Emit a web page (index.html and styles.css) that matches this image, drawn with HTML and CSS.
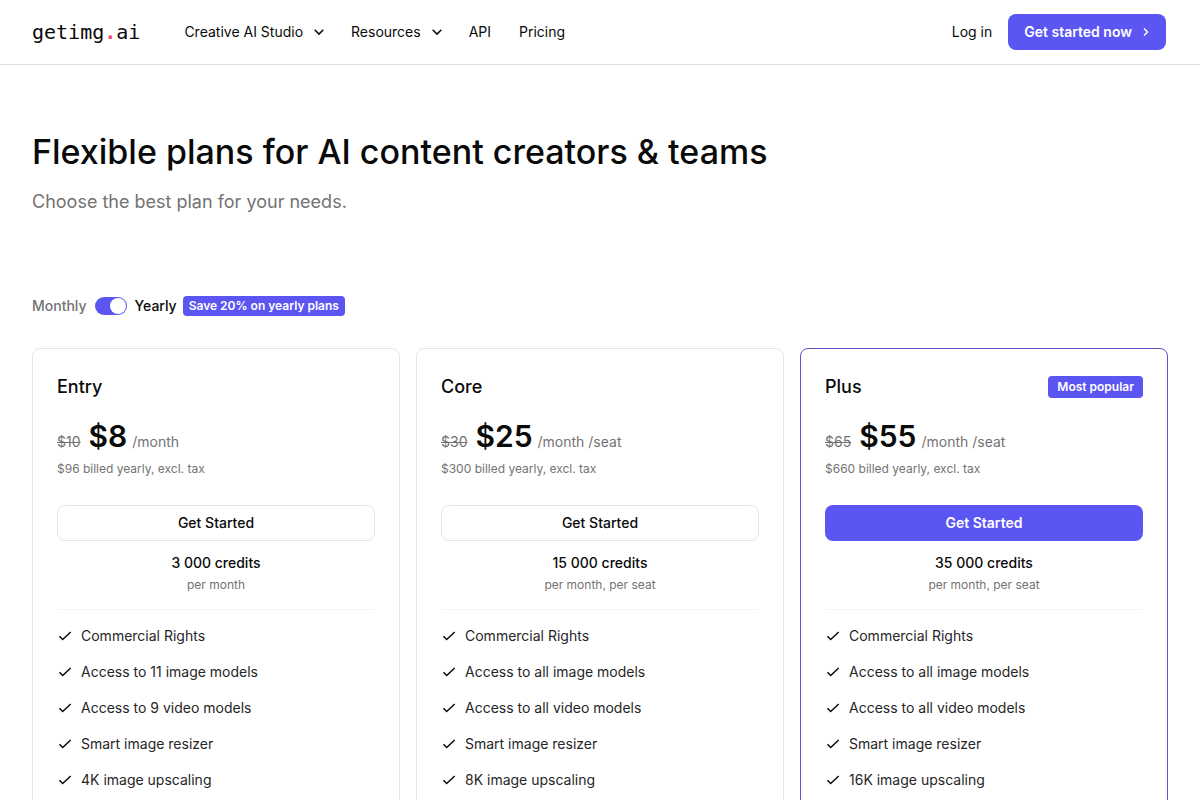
FILE: index.html
```html
<!DOCTYPE html>
<html lang="en">
<head>
    <meta charset="utf-8">
    <meta name="viewport" content="width=device-width, initial-scale=1">
    <title>Pricing - getimg.ai</title>
    <link rel="stylesheet" href="styles.css">
</head>
<body>
    <svg class="sprite" aria-hidden="true">
        <symbol id="check" viewBox="0 0 16 16"><path d="M2.500 8.300l3.200 3.200 8-7.500"/></symbol>
        <symbol id="chevron" viewBox="0 0 16 16"><path d="M3.700 5.800l4.300 4.300 4.300-4.300"/></symbol>
        <symbol id="arrow" viewBox="0 0 8 16"><path d="M2 4.500L5.500 8 2 11.500"/></symbol>
    </svg>

    <header class="header">
        <a class="logo" href="#">getimg<span>.</span>ai</a>
        <nav class="nav">
            <button type="button">Creative AI Studio <svg class="icon"><use href="#chevron"/></svg></button>
            <button type="button">Resources <svg class="icon"><use href="#chevron"/></svg></button>
            <a href="#">API</a>
            <a href="#">Pricing</a>
        </nav>
        <div class="account">
            <a href="#">Log in</a>
            <a class="btn btn-primary" href="#">Get started now <svg class="icon icon-arrow"><use href="#arrow"/></svg></a>
        </div>
    </header>

    <main class="container">
        <h1>Flexible plans for AI content creators &amp; teams</h1>
        <p class="subtitle">Choose the best plan for your needs.</p>

        <div class="billing">
            <span class="billing-off">Monthly</span>
            <input id="yearly" class="switch" type="checkbox" role="switch" checked>
            <div class="billing-on">
                <label for="yearly">Yearly</label>
                <span class="badge">Save 20% on yearly plans</span>
            </div>
        </div>

        <div class="plans">
            <section class="plan">
                <div class="plan-head">
                    <h2>Entry</h2>
                </div>
                <p class="price"><s>$10</s> <strong>$8</strong> <span>/month</span></p>
                <p class="small">$96 billed yearly, excl. tax</p>
                <button class="btn btn-outline" type="button">Get Started</button>
                <div class="credits">
                    <p>3 000 credits</p>
                    <p class="small">per month</p>
                </div>
                <ul class="features">
                    <li><svg class="icon"><use href="#check"/></svg>Commercial Rights</li>
                    <li><svg class="icon"><use href="#check"/></svg>Access to 11 image models</li>
                    <li><svg class="icon"><use href="#check"/></svg>Access to 9 video models</li>
                    <li><svg class="icon"><use href="#check"/></svg>Smart image resizer</li>
                    <li><svg class="icon"><use href="#check"/></svg>4K image upscaling</li>
                </ul>
            </section>

            <section class="plan">
                <div class="plan-head">
                    <h2>Core</h2>
                </div>
                <p class="price"><s>$30</s> <strong>$25</strong> <span>/month /seat</span></p>
                <p class="small">$300 billed yearly, excl. tax</p>
                <button class="btn btn-outline" type="button">Get Started</button>
                <div class="credits">
                    <p>15 000 credits</p>
                    <p class="small">per month, per seat</p>
                </div>
                <ul class="features">
                    <li><svg class="icon"><use href="#check"/></svg>Commercial Rights</li>
                    <li><svg class="icon"><use href="#check"/></svg>Access to all image models</li>
                    <li><svg class="icon"><use href="#check"/></svg>Access to all video models</li>
                    <li><svg class="icon"><use href="#check"/></svg>Smart image resizer</li>
                    <li><svg class="icon"><use href="#check"/></svg>8K image upscaling</li>
                </ul>
            </section>

            <section class="plan plan-popular">
                <div class="plan-head">
                    <h2>Plus</h2>
                    <span class="badge badge-large">Most popular</span>
                </div>
                <p class="price"><s>$65</s> <strong>$55</strong> <span>/month /seat</span></p>
                <p class="small">$660 billed yearly, excl. tax</p>
                <button class="btn btn-primary" type="button">Get Started</button>
                <div class="credits">
                    <p>35 000 credits</p>
                    <p class="small">per month, per seat</p>
                </div>
                <ul class="features">
                    <li><svg class="icon"><use href="#check"/></svg>Commercial Rights</li>
                    <li><svg class="icon"><use href="#check"/></svg>Access to all image models</li>
                    <li><svg class="icon"><use href="#check"/></svg>Access to all video models</li>
                    <li><svg class="icon"><use href="#check"/></svg>Smart image resizer</li>
                    <li><svg class="icon"><use href="#check"/></svg>16K image upscaling</li>
                </ul>
            </section>
        </div>
    </main>
</body>
</html>
```
FILE: styles.css
```css
* {
    box-sizing: border-box;
}
body {
    margin: 0;
    font-family: Inter, "Liberation Sans", sans-serif;
    font-size: 14px;
    line-height: 20px;
    color: #0a0a0a;
    background-color: #fff;
}
h1, h2, p, ul {
    margin: 0;
    padding: 0;
    font-weight: 500;
}
a {
    color: inherit;
    text-decoration: none;
}
button {
    font: inherit;
    color: inherit;
    cursor: pointer;
}
.sprite {
    display: none;
}
.icon {
    width: 16px;
    height: 16px;
    flex: none;
    fill: none;
    stroke: currentColor;
    stroke-width: 1.5;
}
.icon-arrow {
    width: 8px;
}

/* Header */
.header {
    display: flex;
    align-items: center;
    height: 65px;
    padding: 0 34px 0 32px;
    border-bottom: 1px solid #e0e0e0;
}
.logo {
    margin-right: 44px;
    font-family: "DejaVu Sans Mono", monospace;
    font-size: 20px;
}
.logo span {
    color: #f0437f;
    font-weight: 700;
}
.nav {
    display: flex;
    gap: 24px;
}
.nav a, .nav button {
    display: flex;
    align-items: center;
    gap: 8px;
    padding: 0;
    border: 0;
    background: none;
}
.nav a + a {
    margin-left: 4px;
}
.account {
    display: flex;
    align-items: center;
    gap: 16px;
    margin-left: auto;
}
.btn {
    display: flex;
    align-items: center;
    justify-content: center;
    gap: 10px;
    height: 36px;
    padding: 0 15px;
    border: 1px solid transparent;
    border-radius: 8px;
    font-weight: 500;
}
.btn-primary {
    background-color: #5b55f2;
    color: #fff;
    font-weight: 600;
}
.btn-outline {
    border-color: #e5e5e5;
    background-color: #fff;
}

/* Intro */
.container {
    padding: 67px 32px 32px;
}
h1 {
    font-size: 34px;
    line-height: 40px;
}
.subtitle {
    margin-top: 16px;
    font-size: 18px;
    line-height: 28px;
    font-weight: 400;
    color: #737373;
}
.billing {
    display: flex;
    align-items: center;
    gap: 8px;
    margin: 80px 0 32px;
    font-weight: 500;
}
.billing-on {
    display: flex;
    gap: 6px;
}
.billing-off {
    color: #737373;
}
.switch {
    appearance: none;
    display: flex;
    width: 32px;
    height: 18px;
    margin: 0;
    padding: 1px;
    border-radius: 9px;
    background-color: #a3a3a3;
    cursor: pointer;
}
.switch::before {
    content: "";
    width: 16px;
    height: 16px;
    border-radius: 50%;
    background-color: #fff;
}
.switch:checked {
    justify-content: flex-end;
    background-color: #5b55f2;
}
.badge {
    padding: 0 6px;
    border-radius: 4px;
    background-color: #5b55f2;
    color: #fff;
    font-size: 12px;
    line-height: 20px;
    font-weight: 600;
}
.badge-large {
    padding: 1px 9px;
}

/* Plans */
.plans {
    display: grid;
    grid-template-columns: repeat(3, 1fr);
    gap: 16px;
}
.plan {
    padding: 24px;
    border: 1px solid #e5e5e5;
    border-radius: 8px;
}
.plan-popular {
    border-color: #5b55c8;
}
.plan-head {
    display: flex;
    align-items: center;
    justify-content: space-between;
}
.plan h2 {
    font-size: 18px;
    line-height: 28px;
}
.price {
    display: flex;
    align-items: baseline;
    margin-top: 16px;
    line-height: 38px;
    font-weight: 400;
    color: #737373;
}
.price strong {
    margin: 0 5px 0 8px;
    font-size: 30px;
    font-weight: 600;
    color: #0a0a0a;
}
.small {
    font-size: 12px;
    line-height: 16px;
    font-weight: 400;
    color: #737373;
}
.plan .btn {
    width: 100%;
    margin-top: 28px;
}
.credits {
    padding: 12px 0 16px;
    border-bottom: 1px solid #f5f5f5;
    text-align: center;
}
.credits .small {
    margin-top: 4px;
}
.features {
    display: grid;
    gap: 16px;
    margin-top: 16px;
    list-style: none;
}
.features li {
    display: flex;
    align-items: center;
    gap: 8px;
    font-weight: 400;
    color: #262626;
}
.features .icon {
    color: #0a0a0a;
}
```
